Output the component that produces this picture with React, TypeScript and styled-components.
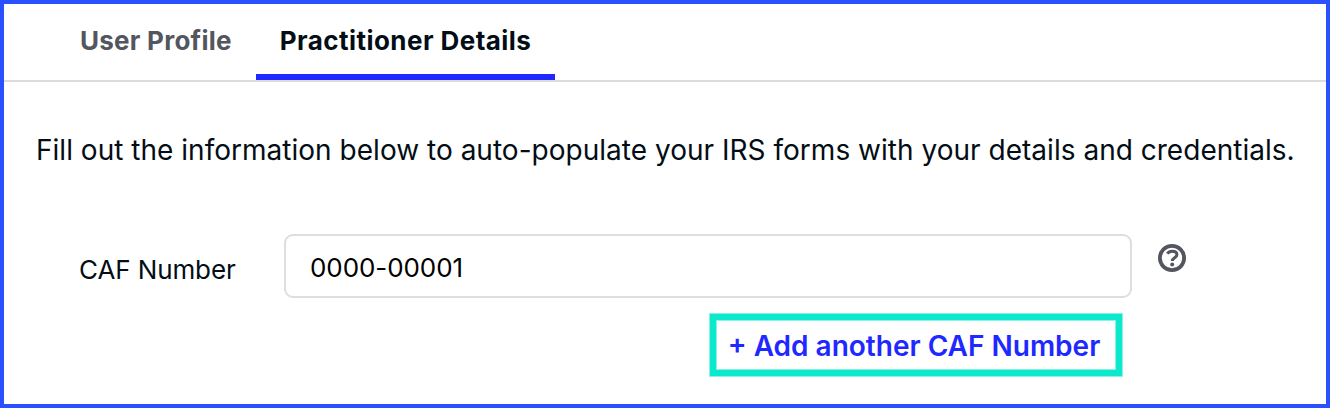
import React from "react";
import styled, { createGlobalStyle } from "styled-components";

const GlobalStyle = createGlobalStyle`
  * { box-sizing: border-box; }
  body { margin: 0; background: #fff; font-family: Inter, sans-serif; color: #030d15; }
`;

const Frame = styled.main`
  width: 1330px;
  height: 408px;
  border: 4px solid #2b50ff;
  background: #fff;
  overflow: hidden;
`;

const Tabs = styled.nav`
  display: flex;
  height: 78px;
  padding-left: 52px;
  border-bottom: 2px solid #dcdcdc;
`;

const Tab = styled.button<{ $active?: boolean }>`
  height: 76px;
  padding: 3px 24px 0;
  border: 0;
  border-bottom: 6px solid ${(p) => (p.$active ? "#1e28ff" : "transparent")};
  background: none;
  font: 700 26px/32px Inter, sans-serif;
  letter-spacing: ${(p) => (p.$active ? "0.45px" : "0.25px")};
  color: ${(p) => (p.$active ? "#030d15" : "#53565e")};
  white-space: nowrap;
`;

const Intro = styled.p`
  margin: 52px 0 0 32px;
  font-size: 28px;
  line-height: 32px;
  letter-spacing: 0.02px;
  white-space: nowrap;
`;

const Field = styled.div`
  display: flex;
  margin-top: 68px;
  padding-left: 75px;
`;

const Label = styled.label`
  width: 205px;
  padding-top: 20px;
  font-size: 26px;
  line-height: 32px;
  letter-spacing: -0.1px;
`;

const Input = styled.input`
  width: 848px;
  height: 64px;
  padding: 2px 24px 0;
  border: 2px solid #dedede;
  border-radius: 9px;
  font: 400 26px/32px Inter, sans-serif;
  letter-spacing: -0.08px;
  color: #000;
`;

const HelpIcon = styled.svg`
  width: 30px;
  height: 30px;
  margin: 9px 0 0 25px;
`;

const AddButton = styled.button`
  display: block;
  width: 412px;
  height: 62px;
  margin: 16px 0 0 706px;
  padding: 1px 4px 0 0;
  border: 6px solid #0ce8cc;
  box-shadow: 0 0 0 1px #0ce8cc80, inset 0 0 0 1px #0ce8cc80;
  background: #fff;
  font: 600 28px/32px Inter, sans-serif;
  color: #1e28ff;
  white-space: nowrap;
`;

export default function App() {
  return (
    <Frame>
      <GlobalStyle />
      <Tabs>
        <Tab>User Profile</Tab>
        <Tab $active>Practitioner Details</Tab>
      </Tabs>
      <Intro>
        Fill out the information below to auto-populate your IRS forms with your details and credentials.
      </Intro>
      <Field>
        <Label htmlFor="caf">CAF Number</Label>
        <Input id="caf" defaultValue="0000-00001" />
        <HelpIcon viewBox="0 0 30 30" fill="none" stroke="#53565e">
          <circle cx="15" cy="15" r="12.1" strokeWidth="3.8" />
          <path
            d="M10.3 10.6C11.5 8.9 13.3 8.3 15.3 8.3c2.6 0 4.6 1.3 4.6 3.5 0 3-4.6 3-4.6 6.2"
            strokeWidth="3.1"
          />
          <circle cx="15.2" cy="21.4" r="2" fill="#53565e" stroke="none" />
        </HelpIcon>
      </Field>
      <AddButton>+ Add another CAF Number</AddButton>
    </Frame>
  );
}
